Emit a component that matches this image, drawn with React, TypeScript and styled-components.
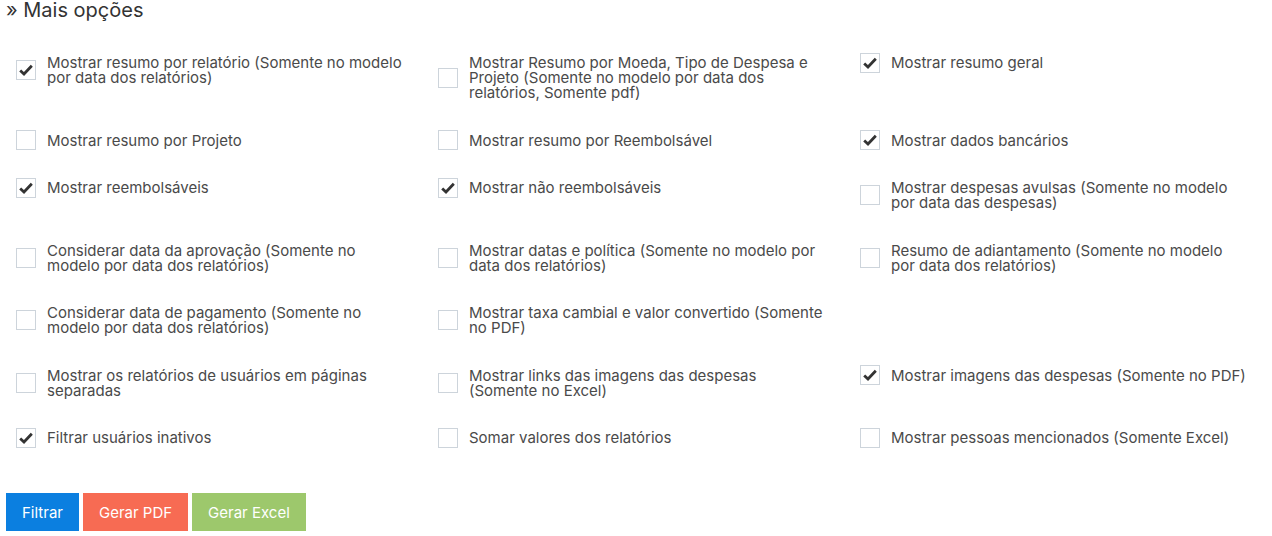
import React, { useState } from 'react';
import styled, { createGlobalStyle } from 'styled-components';

interface optionProps {
  label: string;
  checked: boolean;
}

// null = célula vazia no grid
const initialOptions: (optionProps | null)[] = [
  { label: 'Mostrar resumo por relatório (Somente no modelo por data dos relatórios)', checked: true },
  { label: 'Mostrar Resumo por Moeda, Tipo de Despesa e Projeto (Somente no modelo por data dos relatórios, Somente pdf)', checked: false },
  { label: 'Mostrar resumo geral', checked: true },
  { label: 'Mostrar resumo por Projeto', checked: false },
  { label: 'Mostrar resumo por Reembolsável', checked: false },
  { label: 'Mostrar dados bancários', checked: true },
  { label: 'Mostrar reembolsáveis', checked: true },
  { label: 'Mostrar não reembolsáveis', checked: true },
  { label: 'Mostrar despesas avulsas (Somente no modelo por data das despesas)', checked: false },
  { label: 'Considerar data da aprovação (Somente no modelo por data dos relatórios)', checked: false },
  { label: 'Mostrar datas e política (Somente no modelo por data dos relatórios)', checked: false },
  { label: 'Resumo de adiantamento (Somente no modelo por data dos relatórios)', checked: false },
  { label: 'Considerar data de pagamento (Somente no modelo por data dos relatórios)', checked: false },
  { label: 'Mostrar taxa cambial e valor convertido (Somente no PDF)', checked: false },
  null,
  { label: 'Mostrar os relatórios de usuários em páginas separadas', checked: false },
  { label: 'Mostrar links das imagens das despesas (Somente no Excel)', checked: false },
  { label: 'Mostrar imagens das despesas (Somente no PDF)', checked: true },
  { label: 'Filtrar usuários inativos', checked: true },
  { label: 'Somar valores dos relatórios', checked: false },
  { label: 'Mostrar pessoas mencionados (Somente Excel)', checked: false },
];

const App = () => {
  const [options, setOptions] = useState(initialOptions);

  const toggle = (index: number) => {
    setOptions((prev) =>
      prev.map((opt, i) => (i === index && opt ? { ...opt, checked: !opt.checked } : opt))
    );
  };

  return (
    <>
      <GlobalStyle />
      <Page>
        <Title>» Mais opções</Title>
        <OptionsGrid>
          {options.map((opt, i) =>
            opt ? (
              <Option key={`opt_${i}`} onClick={() => toggle(i)}>
                <Box>
                  {opt.checked && (
                    <svg width='14' height='12' viewBox='0 0 14 12'>
                      <path d='M1.2 6.4 L5 10 L12.8 1.8' fill='none' stroke='#333' strokeWidth='2.8' />
                    </svg>
                  )}
                </Box>
                <OptionLabel>{opt.label}</OptionLabel>
              </Option>
            ) : (
              <div key={`opt_${i}`} />
            )
          )}
        </OptionsGrid>
        <Actions>
          <ActionButton $color='#0b7fe0'>Filtrar</ActionButton>
          <ActionButton $color='#f76b53'>Gerar PDF</ActionButton>
          <ActionButton $color='#9dc86c'>Gerar Excel</ActionButton>
        </Actions>
      </Page>
    </>
  );
};

const GlobalStyle = createGlobalStyle`
  body {
    margin: 0;
    background: #fff;
    font-family: Inter, 'Noto Sans', sans-serif;
  }
`;
const Page = styled.div`
  padding: 0 0 0 6px;
`;
const Title = styled.h3`
  margin: 0;
  font-size: 20px;
  line-height: 20px;
  font-weight: 400;
  color: #333;
`;
const OptionsGrid = styled.div`
  display: grid;
  grid-template-columns: repeat(3, 1fr);
  row-gap: 32.5px;
  margin-top: 35px;
  align-items: start;
`;
const Option = styled.label`
  display: flex;
  align-items: center;
  padding: 0 0 0 10px;
  cursor: pointer;
`;
const Box = styled.span`
  flex: none;
  box-sizing: border-box;
  width: 20px;
  height: 20px;
  margin: -2.5px 11px -2.5px 0;
  border: 1px solid #cdd4db;
  background: #fff;
  display: flex;
  align-items: center;
  justify-content: center;
`;
const OptionLabel = styled.span`
  max-width: 356px;
  font-size: 15px;
  line-height: 15px;
  color: #4a4a4a;
`;
const Actions = styled.div`
  display: flex;
  gap: 4px;
  margin-top: 48px;
`;
const ActionButton = styled.button<{ $color: string }>`
  height: 38px;
  padding: 0 16px;
  border: 0;
  border-radius: 0;
  background: ${(p) => p.$color};
  color: #fff;
  font-family: inherit;
  font-size: 15px;
  cursor: pointer;
`;

export default App;
